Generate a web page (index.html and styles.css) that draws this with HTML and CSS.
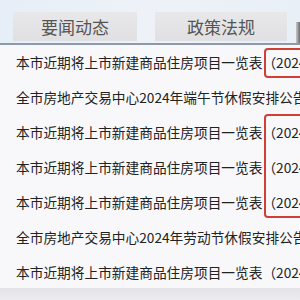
FILE: index.html
```html
<!DOCTYPE html>
<html lang="zh">
<head>
<meta charset="utf-8">
<link rel="stylesheet" href="styles.css">
</head>
<body>
<div class="page">
  <div class="header">
    <div class="tab tab1">要闻动态</div>
    <div class="tab tab2">政策法规</div>
    <div class="edge"></div>
  </div>
  <div class="list">
    <div class="row">本市近期将上市新建商品住房项目一览表（2024年第六批）</div>
    <div class="row">全市房地产交易中心2024年端午节休假安排公告</div>
    <div class="row">本市近期将上市新建商品住房项目一览表（2024年第五批）</div>
    <div class="row">本市近期将上市新建商品住房项目一览表（2024年第四批）</div>
    <div class="row">本市近期将上市新建商品住房项目一览表（2024年第三批）</div>
    <div class="row">全市房地产交易中心2024年劳动节休假安排公告</div>
    <div class="row">本市近期将上市新建商品住房项目一览表（2024年第二批）</div>
    <div class="mark mark1"></div>
    <div class="mark mark2"></div>
  </div>
  <div class="footer"></div>
</div>
</body>
</html>
```
FILE: styles.css
```css
html, body {
  margin: 0;
  padding: 0;
}
body {
  width: 300px;
  height: 300px;
  overflow: hidden;
  font-family: "Noto Sans CJK SC", "Noto Sans", sans-serif;
  background: #eef2f7;
}
.page {
  width: 300px;
  height: 300px;
  display: flex;
  flex-direction: column;
}
.header {
  height: 31px;
  padding: 12px 0 0 13px;
  display: flex;
  align-items: flex-start;
  gap: 18px;
  border-bottom: 2px solid #8e9aab;
  background: linear-gradient(90deg, #e6eef7 0%, #eef2f8 50%, #e9eff7 100%);
  position: relative;
}
.tab {
  height: 29px;
  background: linear-gradient(180deg, #e8e8ea 0%, #e0e0e2 100%);
  color: #555;
  font-size: 17px;
  line-height: 29px;
  text-align: center;
}
.tab1 { width: 124px; }
.tab2 { width: 132px; }
.edge {
  position: absolute;
  right: 0;
  top: 22px;
  width: 4px;
  height: 21px;
  background: linear-gradient(90deg, #c8c8ca, #6a6a6e);
}
.list {
  position: relative;
  height: 243px;
  padding-left: 16px;
  background: #f8f8fb;
  overflow: hidden;
}
.row {
  height: 35px;
  line-height: 35px;
  font-size: 13.7px;
  color: #222;
  white-space: nowrap;
}
.mark {
  position: absolute;
  left: 264px;
  width: 50px;
  border: 2px solid #cf3f36;
  border-radius: 4px;
}
.mark1 {
  top: 3px;
  height: 26px;
}
.mark2 {
  top: 69px;
  height: 100px;
}
.footer {
  flex: 1;
  background: linear-gradient(180deg, #e4e4e8, #ececf0);
}
```
